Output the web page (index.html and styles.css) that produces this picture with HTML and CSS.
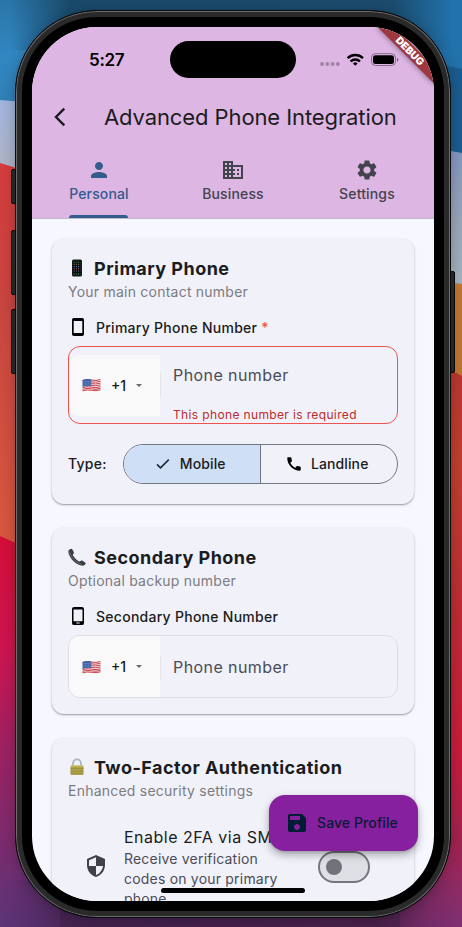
FILE: index.html
```html
<!DOCTYPE html>
<html lang="en">
<head>
<meta charset="utf-8">
<title>Advanced Phone Integration</title>
<link rel="stylesheet" href="styles.css">
</head>
<body>
<svg class="wallpaper" viewBox="0 0 462 927" aria-hidden="true">
  <defs>
    <linearGradient id="lb" x1="0" y1="0" x2="0" y2="1"><stop offset="0" stop-color="#2a75a8"/><stop offset=".5" stop-color="#3187c1"/><stop offset="1" stop-color="#2f7fb5"/></linearGradient>
    <linearGradient id="ll" x1="0" y1="0" x2="0" y2="1"><stop offset="0" stop-color="#9fb4dc"/><stop offset="1" stop-color="#b3b3bd"/></linearGradient>
    <linearGradient id="lr" x1="0" y1="0" x2="0" y2="1"><stop offset="0" stop-color="#d43c3f"/><stop offset=".35" stop-color="#c94540"/><stop offset="1" stop-color="#d9593f"/></linearGradient>
    <linearGradient id="lm" x1="0" y1="0" x2="0" y2="1"><stop offset="0" stop-color="#d40f38"/><stop offset=".3" stop-color="#cb1550"/><stop offset=".55" stop-color="#9c2263"/><stop offset="1" stop-color="#5c3478"/></linearGradient>
    <linearGradient id="rl" x1="0" y1="0" x2="0" y2="1"><stop offset="0" stop-color="#8095c4"/><stop offset=".5" stop-color="#98a4b8"/><stop offset="1" stop-color="#a5b4c0"/></linearGradient>
    <linearGradient id="rr" x1="0" y1="0" x2="0" y2="1"><stop offset="0" stop-color="#b93330"/><stop offset=".2" stop-color="#c0402f"/><stop offset=".45" stop-color="#bd2d33"/><stop offset=".7" stop-color="#c81c3c"/><stop offset=".85" stop-color="#a32350"/><stop offset="1" stop-color="#7f2f72"/></linearGradient>
    <linearGradient id="bt"><stop offset="0" stop-color="#4b2a5e" stop-opacity="0"/><stop offset=".18" stop-color="#43224f"/><stop offset=".5" stop-color="#45214c"/><stop offset=".82" stop-color="#4a2149"/><stop offset="1" stop-color="#6b2b62" stop-opacity="0"/></linearGradient>
    <linearGradient id="tp"><stop offset=".02" stop-color="#1b4c6e" stop-opacity="0"/><stop offset=".15" stop-color="#1a4a6b"/><stop offset=".85" stop-color="#1b4c6e"/><stop offset=".98" stop-color="#1b4c6e" stop-opacity="0"/></linearGradient>
  </defs>
  <rect width="231" height="110" fill="url(#lb)"/>
  <path d="M0 100 60 105V190H0Z" fill="url(#ll)"/>
  <path d="M0 163 60 181V560H0Z" fill="url(#lr)"/>
  <path d="M0 536 60 563V927H0Z" fill="url(#lm)"/>
  <rect x="231" width="231" height="160" fill="#2272ac"/>
  <path d="M400 57 462 69V160H400Z" fill="#1b5c90"/>
  <path d="M400 142 462 153V290H400Z" fill="url(#rl)"/>
  <path d="M400 276 462 284V380H400Z" fill="#bf7730"/>
  <path d="M400 345 462 376V927H400Z" fill="url(#rr)"/>
  <rect width="462" height="50" fill="url(#tp)"/>
  <rect x="60" y="900" width="340" height="27" fill="#43224f"/>
  <rect y="880" width="462" height="47" fill="url(#bt)"/>
</svg>

<div class="device">
  <i class="key key-action"></i><i class="key key-up"></i><i class="key key-down"></i><i class="key key-power"></i>
  <div class="screen">
    <header class="topbar">
      <div class="status">
        <span class="clock">5:27</span>
        <span class="island"></span>
        <svg class="signals" width="82" height="16" viewBox="0 0 82 16">
          <g fill="#000" fill-opacity=".28"><circle cx="3" cy="12" r="2"/><circle cx="8.3" cy="12" r="2"/><circle cx="13.6" cy="12" r="2"/><circle cx="18.9" cy="12" r="2"/></g>
          <g fill="none" stroke="#000" stroke-width="2.4"><path d="M28.6 6.2a11 11 0 0 1 15.400 0"/><path d="M31.600 9.500a6.600 6.600 0 0 1 9.400 0"/></g>
          <path d="m36.300 13.700-2.300-2.300a3.300 3.300 0 0 1 4.600 0Z"/>
          <rect x="52.500" y="1.700" width="24" height="11.800" rx="3.800" fill="none" stroke="#000" stroke-opacity=".4"/>
          <rect x="54" y="3.200" width="21" height="8.800" rx="2.500"/>
          <path d="M78 5.700q1.500.6 1.500 2t-1.500 2Z" fill-opacity=".45"/>
        </svg>
      </div>
      <div class="appbar">
        <svg class="back" width="24" height="24" viewBox="0 0 24 24"><path d="m16.300 3.700-8.300 8.300 8.300 8.300" fill="none" stroke="#1a1c20" stroke-width="2.400"/></svg>
        <h1>Advanced Phone Integration</h1>
      </div>
      <nav class="tabs">
        <a class="tab active"><svg viewBox="0 0 24 24"><path d="M12 12c2.210 0 4-1.790 4-4s-1.790-4-4-4-4 1.790-4 4 1.790 4 4 4zm0 2c-2.670 0-8 1.340-8 4v2h16v-2c0-2.660-5.330-4-8-4z"/></svg><span>Personal</span></a>
        <a class="tab"><svg viewBox="0 0 24 24"><path d="M12 7V3H2v18h20V7H12zM6 19H4v-2h2v2zm0-4H4v-2h2v2zm0-4H4V9h2v2zm0-4H4V5h2v2zm4 12H8v-2h2v2zm0-4H8v-2h2v2zm0-4H8V9h2v2zm0-4H8V5h2v2zm10 12h-8v-2h2v-2h-2v-2h2v-2h-2V9h8v10zm-2-8h-2v2h2v-2zm0 4h-2v2h2v-2z"/></svg><span>Business</span></a>
        <a class="tab"><svg viewBox="0 0 24 24"><path d="M19.140 12.940c.040-.3.060-.610.060-.940 0-.320-.020-.640-.070-.940l2.030-1.580c.180-.140.230-.410.120-.610l-1.920-3.320c-.120-.220-.370-.290-.590-.220l-2.390.960c-.5-.380-1.030-.7-1.620-.940l-.360-2.540c-.040-.240-.240-.410-.480-.410h-3.840c-.240 0-.430.170-.470.410l-.360 2.540c-.590.240-1.130.570-1.620.940l-2.390-.960c-.220-.080-.470 0-.590.220L2.740 8.870c-.120.210-.080.470.120.610l2.030 1.580c-.050.3-.090.630-.090.940s.020.640.070.940l-2.030 1.580c-.180.140-.230.410-.120.610l1.920 3.320c.120.220.370.290.590.220l2.390-.960c.5.380 1.030.7 1.620.940l.360 2.540c.050.240.240.410.480.410h3.840c.240 0 .440-.170.470-.410l.360-2.540c.590-.240 1.130-.560 1.620-.940l2.390.960c.220.080.470 0 .590-.220l1.920-3.320c.120-.220.070-.470-.120-.610l-2.010-1.580zM12 15.600c-1.980 0-3.600-1.620-3.600-3.600s1.620-3.600 3.600-3.600 3.600 1.620 3.600 3.600-1.620 3.600-3.600 3.600z"/></svg><span>Settings</span></a>
      </nav>
    </header>

    <main class="content">
      <section class="card">
        <h2><svg class="emoji" viewBox="0 0 18 18"><rect x="4" y=".5" width="10" height="17" rx="1.500" fill="#17181c"/><rect x="5" y="2" width="8" height="14" fill="#08090b"/><g stroke-width="1.100" stroke-dasharray="1.100 1.100"><path d="M5.600 3.200h7" stroke="#3b9a4c"/><path d="M5.600 5.400h7" stroke="#786650"/><path d="M5.600 7.600h7" stroke="#427ba1"/><path d="M5.600 9.800h7" stroke="#a14b83"/><path d="M5.600 12h7" stroke="#737373"/><path d="M5.600 15h7" stroke="#4dbd64"/></g></svg><span>Primary Phone</span></h2>
        <p class="sub">Your main contact number</p>
        <div class="label"><svg viewBox="0 0 20 20"><path d="M5.800.900h8.400A1.800 1.800 0 0 1 16 2.700v14.600a1.800 1.800 0 0 1-1.800 1.800H5.800A1.800 1.800 0 0 1 4 17.300V2.700A1.800 1.800 0 0 1 5.800.900Zm-.1 3v12.200h8.600V3.900Z"/></svg><span>Primary Phone Number</span><b>*</b></div>
        <div class="field error">
          <div class="code"><svg class="flag" viewBox="0 0 19 14"><use href="#us"/></svg><span>+1</span><i class="caret"></i></div>
          <div class="entry"><span>Phone number</span><em>This phone number is required</em></div>
        </div>
        <div class="type">
          <span>Type:</span>
          <div class="segments">
            <div class="seg on"><svg viewBox="0 0 18 18"><path d="m3 9.400 3.500 3.500 8.300-8.300" fill="none" stroke="#1b2733" stroke-width="1.500"/></svg><span>Mobile</span></div>
            <div class="seg"><svg viewBox="0 0 24 24"><path d="M20.010 15.380c-1.230 0-2.420-.2-3.530-.560-.350-.120-.740-.030-1.010.240l-1.570 1.970c-2.830-1.350-5.480-3.900-6.890-6.830l1.950-1.660c.270-.280.350-.670.240-1.020-.370-1.110-.560-2.300-.560-3.530 0-.540-.450-.990-.990-.990H4.190C3.650 3 3 3.240 3 3.990 3 13.280 10.730 21 20.010 21c.710 0 .990-.630.990-1.180v-3.450c0-.540-.450-.990-.990-.990z"/></svg><span>Landline</span></div>
          </div>
        </div>
      </section>

      <section class="card">
        <h2><svg class="emoji" viewBox="0 0 18 18"><path d="M3.200.700C1.300 1 0 2.500.400 4.400 2 11 8 17 14.500 17.700c1.600 0 2.900-1 3.300-2.500.1-.6-3.700-3.100-4.500-2.800l-1.600 1.200C9 12.600 5.800 9.400 4.700 6.700L5.900 5.300C6.300 4.400 4.200.500 3.200.700Z" fill="#3c3d40"/><path d="M1.500 3.500c1.200 5.500 6 11.200 12.200 12.900" fill="none" stroke="#77797c" stroke-width=".8"/></svg><span>Secondary Phone</span></h2>
        <p class="sub">Optional backup number</p>
        <div class="label"><svg viewBox="0 0 20 20"><path d="M6.200.900h7.600A2.200 2.200 0 0 1 16 3.100v13.800a2.200 2.200 0 0 1-2.200 2.200H6.200A2.200 2.200 0 0 1 4 16.900V3.100A2.200 2.200 0 0 1 6.200.900Zm-.7 2.500v11.800h9V3.400Zm2.800 13.100v.9h3.400v-.9Z"/></svg><span>Secondary Phone Number</span></div>
        <div class="field">
          <div class="code"><svg class="flag" viewBox="0 0 19 14"><use href="#us"/></svg><span>+1</span><i class="caret"></i></div>
          <div class="entry"><span>Phone number</span></div>
        </div>
      </section>

      <section class="card last">
        <h2><svg class="emoji" viewBox="0 0 18 18"><path d="M5 9V5.400a4 4 0 0 1 8 0V9" fill="none" stroke="#a9b6c0" stroke-width="1.800"/><rect x="2.500" y="7.500" width="13" height="9.500" rx="1" fill="#b0a24a"/><path d="M2.500 10.500h13M2.500 13h13M2.500 15.300h13" stroke="#958938" stroke-width=".7"/><path d="M3 8h12" stroke="#d4c878"/></svg><span>Two-Factor Authentication</span></h2>
        <p class="sub">Enhanced security settings</p>
        <div class="option">
          <svg class="shield" viewBox="0 0 24 24"><path d="M12 1 3 5v6c0 5.550 3.840 10.740 9 12 5.160-1.260 9-6.450 9-12V5l-9-4zm0 10.990h7c-.530 4.120-3.280 7.790-7 8.940V12H5V6.300l7-3.110v8.800z"/></svg>
          <div class="copy"><strong>Enable 2FA via SMS</strong><p>Receive verification<br>codes on your primary<br>phone</p></div>
          <span class="switch"><i></i></span>
        </div>
      </section>
    </main>

    <button class="fab"><svg viewBox="0 0 24 24"><path d="M17 3H5c-1.110 0-2 .900-2 2v14c0 1.100.890 2 2 2h14c1.100 0 2-.900 2-2V7l-4-4zm-5 16c-1.660 0-3-1.340-3-3s1.340-3 3-3 3 1.340 3 3-1.340 3-3 3zm3-10H5V5h10v4z"/></svg><span>Save Profile</span></button>
    <i class="home"></i>
    <svg class="ribbon" viewBox="0 0 70 70"><g transform="translate(70 0) rotate(45)"><rect x="-40" y="28" width="80" height="12"/><text x="0" y="37.600">DEBUG</text></g></svg>
  </div>
</div>

<svg class="defs" aria-hidden="true"><defs><g id="us">
  <path d="M.5 2Q5 .300 9.500 1.500T18.500 1V12Q14 13.500 9.500 12.500T.5 13.300Z" fill="#f3ecee"/>
  <g fill="none" stroke="#c8424e" stroke-width="1"><path d="M.5 2.500Q5 .800 9.500 2T18.500 1.500M9 3.800q4.500 1 9.500-.5M9 5.600q4.500 1 9.500-.5M9 7.400q4.500 1 9.500-.5M.5 9.700Q5 8 9.500 9.200T18.500 8.700M.5 11.300Q5 9.700 9.500 10.800T18.500 10.300M.5 12.900Q5 11.300 9.500 12.300T18.500 11.800"/></g>
  <path d="M.5 2Q5 .300 9.300 1.500V8.200Q5 7.400.5 8.900Z" fill="#3f64a8"/>
  <path d="M1.500 3.500h7M1.500 5.200h7M1.500 6.900h7" stroke="#9fb3d8" stroke-width=".6" stroke-dasharray=".7 .9"/>
</g></defs></svg>
</body>
</html>
```
FILE: styles.css
```css
* { box-sizing: border-box; margin: 0; padding: 0; }
body {
  width: 462px; height: 927px; overflow: hidden; position: relative;
  padding: 10px 0 0 15px;
  font-family: Inter, "Liberation Sans", sans-serif;
  color: #1a1c20;
}
svg { display: block; flex: none; }
.defs { position: absolute; width: 0; height: 0; }
.wallpaper { position: absolute; inset: 0; width: 462px; height: 927px; }

.device {
  position: relative; width: 436px; height: 908px; padding: 16px;
  border: 1px solid #08090a; border-radius: 82px;
  background: #000;
  box-shadow: inset 0 0 0 1px #6c6d6f, inset 0 0 0 6px #2a2a2b, 0 2px 14px rgba(0,0,0,.25);
}
.key { position: absolute; width: 5px; background: #252526; border: 1px solid #090909; border-radius: 2px; }
.key-action { left: -5px; top: 158px; height: 35px; }
.key-up { left: -5px; top: 219px; height: 65px; }
.key-down { left: -5px; top: 298px; height: 65px; }
.key-power { right: -5px; top: 260px; height: 102px; }

.screen { position: relative; width: 402px; height: 874px; overflow: hidden; border-radius: 65px; background: #f7f7ff; }

.topbar { height: 192px; background: #deb6e4; border-bottom: 1px solid #bfb9cc; display: flex; flex-direction: column; }
.status { height: 62px; display: grid; grid-template-columns: 138px 126px 1fr; align-items: center; padding-top: 3px; }
.clock { padding-left: 57px; font-size: 17px; font-weight: 600; letter-spacing: -.3px; color: #000; }
.island { height: 37px; border-radius: 19px; background: #000; }
.signals { margin-left: 23px; }
.appbar { height: 56px; display: flex; align-items: center; padding-left: 16px; }
.back { width: 24px; }
h1 { margin-left: 32px; font-size: 22px; font-weight: 400; letter-spacing: -.1px; white-space: nowrap; }
.tabs { height: 73px; display: grid; grid-template-columns: repeat(3, 1fr); justify-items: center; }
.tab { display: flex; flex-direction: column; align-items: center; padding-top: 13px; color: #43444d; font-size: 14px; font-weight: 500; line-height: 20px; letter-spacing: .15px; }
.tab svg { width: 24px; height: 24px; margin-bottom: 2px; fill: currentColor; }
.tab.active { color: #335b8c; }
.tab.active::after { content: ""; width: 59px; height: 3px; margin-top: 11px; border-radius: 3px 3px 0 0; background: #335b8c; }

.content { padding: 20px; display: flex; flex-direction: column; gap: 24px; }
.card { padding: 15px 16px 0; border-radius: 12px; background: #f1f1fa; box-shadow: 0 1px 3px rgba(0,0,0,.22), 0 1px 1px rgba(0,0,0,.2); height: 186px; flex: none; }
.card:first-child { height: 265px; }
.card.last { height: 240px; }
h2 { height: 28px; display: flex; align-items: center; gap: 8px; font-size: 18px; font-weight: 700; letter-spacing: .47px; white-space: nowrap; }
.emoji { width: 18px; height: 18px; }
.sub { height: 20px; font-size: 14px; line-height: 20px; color: #7c7c80; letter-spacing: .23px; }
.label { height: 20px; margin-top: 15px; display: flex; align-items: center; font-size: 14px; font-weight: 500; letter-spacing: .27px; }
.label svg { width: 20px; height: 20px; margin-right: 8px; }
.label b { margin-left: 4px; color: #ef5350; font-weight: 500; }
.field { height: 63px; margin-top: 9px; display: flex; align-items: stretch; border: 1px solid #dedee2; border-radius: 12px; overflow: hidden; }
.code { width: 91px; padding-left: 13px; display: flex; align-items: center; background: #f9f9f9; font-size: 14px; font-weight: 500; }
.flag { width: 19px; height: 14px; margin-right: 10px; }
.caret { margin-left: 10px; border: 3px solid transparent; border-top: 3.500px solid #66686c; border-bottom: 0; }
.entry { flex: 1; display: flex; flex-direction: column; justify-content: center; padding-left: 13px; font-size: 16px; color: #4b4c55; letter-spacing: .42px; background: linear-gradient(#e5e5e8, #e5e5e8) 0 50% / 1px 24px no-repeat; }
.field.error { height: 78px; border: 1.300px solid #ef5350; align-items: center; }
.error .code { height: 61px; border-radius: 11px 0 0 11px; }
.error .entry { height: 76px; justify-content: flex-start; padding-top: 18px; line-height: 20px; }
.entry em { font-style: normal; font-size: 12px; line-height: 16px; letter-spacing: .36px; color: #b92c2c; margin-top: 22px; white-space: nowrap; }
.type { height: 40px; margin-top: 20px; display: flex; align-items: center; justify-content: space-between; font-size: 14px; font-weight: 500; letter-spacing: .25px; line-height: 18px; }
.type span { padding-bottom: 1px; }
.segments { width: 275px; height: 40px; display: grid; grid-template-columns: 1fr 1fr; border: 1px solid #74777f; border-radius: 20px; overflow: hidden; }
.seg { display: flex; align-items: center; justify-content: center; gap: 8px; padding-right: 4px; letter-spacing: .1px; }
.seg svg { width: 18px; height: 18px; }
.seg.on { background: #cfdff6; border-right: 1px solid #74777f; }

.option { margin-top: 24px; display: flex; align-items: flex-start; }
.shield { width: 24px; height: 24px; margin: 29px 0 0 16px; fill: #3f424b; }
.copy { width: 178px; margin-left: 16px; }
.copy strong { display: block; font-size: 16px; line-height: 24px; font-weight: 400; letter-spacing: .5px; white-space: nowrap; }
.copy p { font-size: 14px; line-height: 20px; letter-spacing: .2px; color: #4b4c55; white-space: nowrap; }
.switch { width: 52px; height: 32px; margin: 26px 0 0 16px; padding: 6px; border: 2px solid #74777f; border-radius: 16px; background: #dfe0e5; }
.switch i { display: block; width: 16px; height: 16px; border-radius: 8px; background: #70737a; }

.fab { position: absolute; left: 237px; top: 768px; width: 149px; height: 56px; padding-left: 16px; display: flex; align-items: center; gap: 8px; border: 0; border-radius: 16px; background: #86209f; color: #071b36; font: 500 14px Inter, sans-serif; letter-spacing: .1px; white-space: nowrap; box-shadow: 0 4px 8px rgba(0,0,0,.3), 0 1px 3px rgba(0,0,0,.15); }
.fab span { padding-bottom: 2px; }
.fab svg { width: 24px; height: 24px; fill: #001c35; }
.home { position: absolute; left: 129px; top: 861px; width: 144px; height: 5px; border-radius: 3px; background: #000; }
.ribbon { position: absolute; right: 0; top: 0; width: 70px; height: 70px; }
.ribbon rect { fill: #9f3740; filter: drop-shadow(0 0 3px rgba(0,0,0,.45)); }
.ribbon text { fill: #fff; font-size: 10.200px; font-weight: 900; text-anchor: middle; }
```
